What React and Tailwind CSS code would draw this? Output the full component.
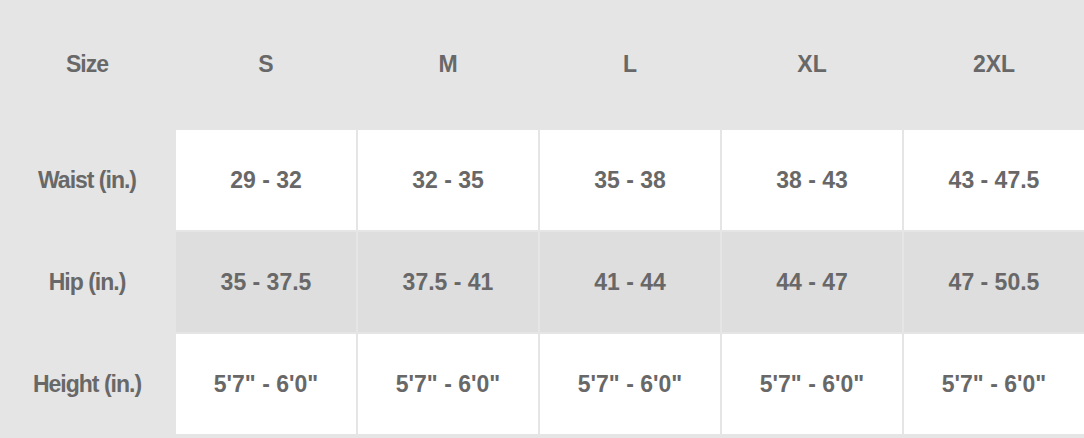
import { Fragment } from 'react';

const sizes = ['S', 'M', 'L', 'XL', '2XL'];

const rows = [
    { label: 'Waist (in.)', values: ['29 - 32', '32 - 35', '35 - 38', '38 - 43', '43 - 47.5'], bg: 'bg-white' },
    { label: 'Hip (in.)', values: ['35 - 37.5', '37.5 - 41', '41 - 44', '44 - 47', '47 - 50.5'], bg: 'bg-[#dedede]' },
    { label: 'Height (in.)', values: ['5\'7" - 6\'0"', '5\'7" - 6\'0"', '5\'7" - 6\'0"', '5\'7" - 6\'0"', '5\'7" - 6\'0"'], bg: 'bg-white' },
];

export default function App() {
    return (
        <div className="w-[1084px] h-[438px] overflow-hidden bg-[#e5e5e5] font-['Liberation_Sans',Arial,sans-serif] font-bold text-[#686868]">
            <div className="grid grid-cols-[174px_repeat(5,180px)] grid-rows-[128px_repeat(3,100px)] gap-[2px]">
                <div className="flex items-center justify-center text-[23px] tracking-[-1px]">Size</div>
                {sizes.map(s => (
                    <div key={s} className="flex items-center justify-center text-[23px]">{s}</div>
                ))}

                {rows.map(row => (
                    <Fragment key={row.label}>
                        <div className="flex items-center justify-center text-[23px] tracking-[-1px]">
                            {row.label}
                        </div>
                        {row.values.map((v, i) => (
                            <div key={i} className={`flex items-center justify-center text-[23px] ${row.bg}`}>
                                {v}
                            </div>
                        ))}
                    </Fragment>
                ))}
            </div>
        </div>
    );
}
